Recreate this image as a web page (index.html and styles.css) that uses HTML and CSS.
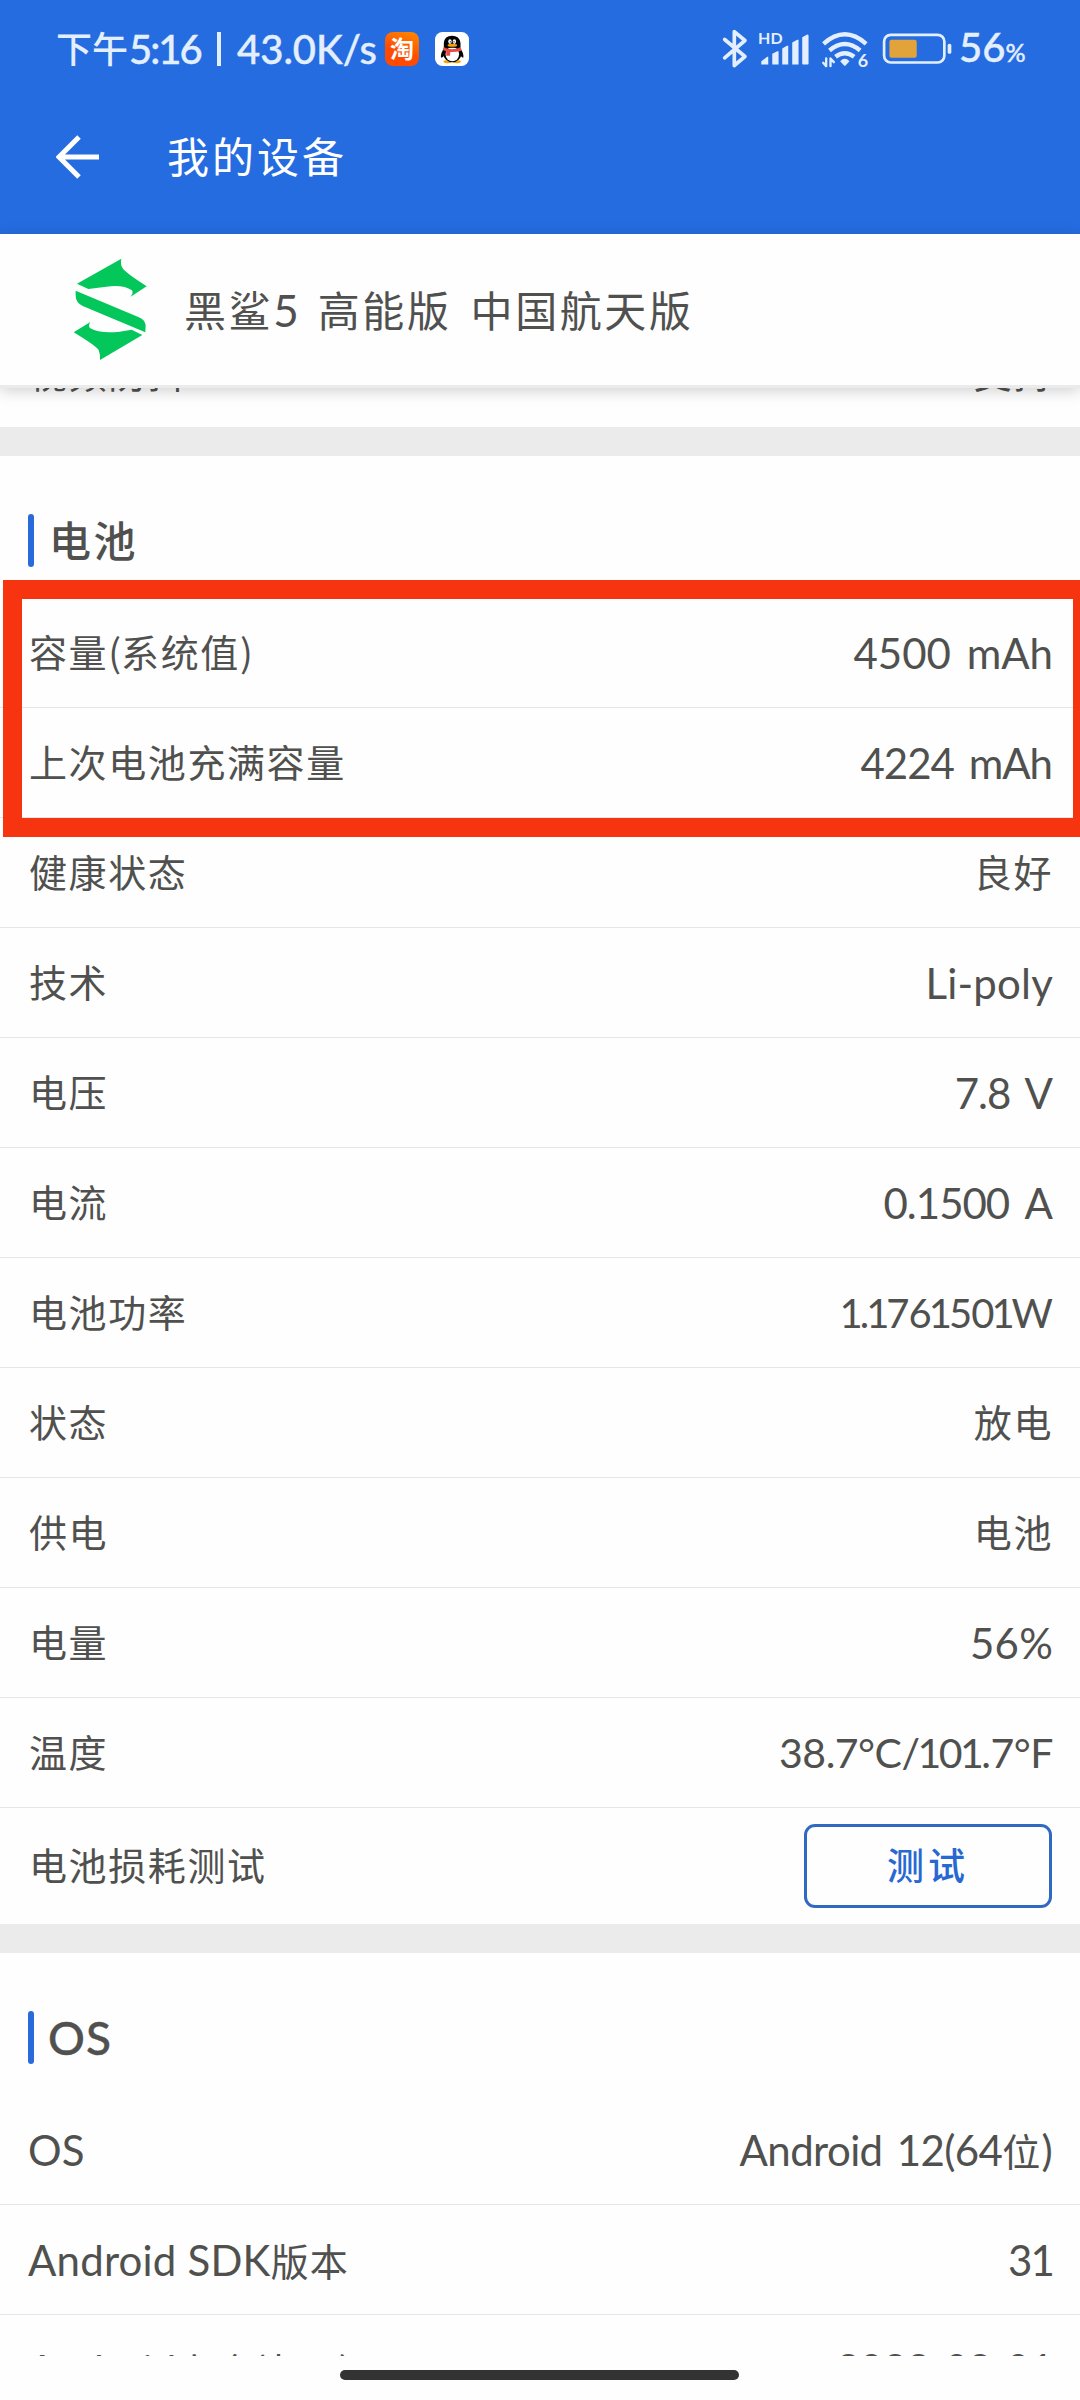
FILE: index.html
```
<!DOCTYPE html>
<html lang="zh-CN">
<head>
  <meta charset="UTF-8" />
  <meta name="viewport" content="width=device-width, initial-scale=1.0"/>
  <title>我的设备</title>
  <link rel="stylesheet" href="styles.css">
</head>
<body>

  <div class="screen">

    <div class="status-bar">
      <span class="status-cn">下午</span><span class="status-time">5:16</span>
      <span class="status-sep"></span>
      <span class="status-speed">43.0K/s</span>
      <span class="app-icon taobao">淘</span>
      <svg class="app-icon qq" viewBox="0 0 100 100">
        <rect width="100" height="100" rx="22" fill="#fff"/>
        <ellipse cx="37" cy="87" rx="12" ry="5" fill="#f5a400"/>
        <ellipse cx="64" cy="87" rx="12" ry="5" fill="#f5a400"/>
        <path d="M28 46 Q15 62 18 76 Q24 76 28 66 L74 66 Q78 76 83 76 Q86 62 73 46Z" fill="#050505"/>
        <ellipse cx="51" cy="62" rx="27" ry="27" fill="#050505"/>
        <ellipse cx="51" cy="65" rx="20" ry="21" fill="#fff"/>
        <path d="M26 46 V32 Q28 11 50 11 Q72 11 75 32 V46Z" fill="#050505"/>
        <ellipse cx="44" cy="28" rx="5" ry="7" fill="#fff"/>
        <ellipse cx="57" cy="28" rx="5" ry="7" fill="#fff"/>
        <circle cx="45" cy="29" r="2" fill="#050505"/>
        <circle cx="56" cy="29" r="2" fill="#050505"/>
        <ellipse cx="51" cy="39" rx="14" ry="4.5" fill="#f5a400"/>
        <path d="M25 45 Q50 56 76 45 L78 55 Q60 60 45 59 L44 70 H33 V57 L23 53Z" fill="#e94b45"/>
      </svg>

      <svg class="status-icons" viewBox="120 85 700 125">
        <g fill="none" stroke="#e3efff" stroke-linecap="round" stroke-linejoin="round">
          <path d="M134 119 L195 170 L163 197 V95 L195 122 L134 174" stroke-width="11"/>
          <path d="M431 132 Q495 75 559 132" stroke-width="13" stroke-linecap="butt"/>
          <path d="M449 152 Q495 113 541 152" stroke-width="13" stroke-linecap="butt"/>
          <path d="M467 171 Q495 149 523 171" stroke-width="13" stroke-linecap="butt"/>
          <rect x="613" y="105" width="181" height="83" rx="20" stroke-width="8"/>
          <path d="M439 176 V199 L430 189 M452 199 V176 L462 187" stroke-width="7"/>
        </g>
        <g fill="#e3efff">
          <path d="M244 194 V184 L262 171 H265 V194Z"/>
          <path d="M277 194 V162 L292 154 H296 V194Z"/>
          <path d="M307 194 V146 L321 138 H325 V194Z"/>
          <path d="M337 194 V128 L352 120 H356 V194Z"/>
          <path d="M367 191 V112 L382 104 Q386 104 386 108 V191 Q386 194 383 194 H370 Q367 194 367 191Z"/>
          <path d="M481 184 Q495 170 509 184 L498 196 Q495 199 492 196Z"/>
          <rect x="804" y="132" width="11" height="30" rx="5"/>
          <text class="icon-text" x="234" y="134" textLength="74">HD</text>
          <text class="icon-text wifi-six" x="534" y="201">6</text>
        </g>
        <rect x="629" y="120" width="82" height="54" rx="6" fill="#e2a33b"/>
      </svg>
      <span class="status-battery">56<small>%</small></span>
    </div>

    <div class="title-bar">
      <svg class="back" viewBox="0 0 44 44">
        <path d="M43 22 H4 M23 2 L3 22 L23 42" fill="none" stroke="#fff" stroke-width="5"/>
      </svg>
      <h1>我的设备</h1>
    </div>

    <div class="device-bar">
      <svg class="device-logo" viewBox="40 717 225 309" fill="#03c75a">
        <path d="M52 794 L185 719 Q181 735 189 748 Q197 761 261 802 L213 833 Q222 822 217 814 Q190 796 140 803 L86 810Z"/>
        <path d="M48 815 L236 894 Q256 902 258 918 L257 940 L69 861 Q48 850 48 830Z"/>
        <path d="M42 940 L92 909 Q84 922 92 928 Q120 944 180 938 L216 932 L248 948 L121 1023 Q122 1005 117 993 Q108 980 42 940Z"/>
      </svg>
      <h2><span>黑鲨<i>5</i></span><span>高能版</span><span>中国航天版</span></h2>
    </div>

    <div class="content">
      <div class="row first-row"><span>视频防抖</span><span>支持</span></div>

      <div class="section">
        <h3><span>电池</span></h3>
        <div class="row"><span>容量<i>(</i>系统值<i>)</i></span><span class="num mah">4500 mAh</span></div>
        <div class="row"><span>上次电池充满容量</span><span class="num mah2">4224 mAh</span></div>
        <div class="row"><span>健康状态</span><span>良好</span></div>
        <div class="row"><span>技术</span><span class="num">Li-poly</span></div>
        <div class="row"><span>电压</span><span class="num volt">7.8 V</span></div>
        <div class="row"><span>电流</span><span class="num amp">0.1500 A</span></div>
        <div class="row"><span>电池功率</span><span class="num watt"><em>1</em>.<em>1</em>76<em>1</em>50<em>1</em>W</span></div>
        <div class="row"><span>状态</span><span>放电</span></div>
        <div class="row"><span>供电</span><span>电池</span></div>
        <div class="row"><span>电量</span><span class="num">56%</span></div>
        <div class="row"><span>温度</span><span class="num temp">38.7°C/<em>1</em>0<em>1</em>.7°F</span></div>
        <div class="row test-row"><span>电池损耗测试</span><button>测试</button></div>
        <div class="highlight"></div>
      </div>

      <div class="section">
        <h3 class="os-title"><span>OS</span></h3>
        <div class="row"><span class="num label">OS</span><span class="num android">Android 12(64<b>位</b>)</span></div>
        <div class="row"><span class="num label">Android SDK<b>版本</b></span><span class="num">3<em>1</em></span></div>
        <div class="row"><span class="num label">Android<b>安全补丁级</b></span><span class="num date">2022-08-01</span></div>
      </div>
    </div>

    <div class="nav-bar"><div class="handle"></div></div>
  </div>

</body>
</html>
```

FILE: styles.css
```
* {
  box-sizing: border-box;
}

body {
  margin: 0;
  background: #fefefe;
  font-family: "Noto Sans CJK SC", sans-serif;
  color: #50514f;
}

h1, h2, h3 {
  margin: 0;
  font-weight: normal;
}

i, b, em {
  font-style: normal;
  font-weight: normal;
}

.screen {
  width: 1080px;
  height: 2400px;
  display: flex;
  flex-direction: column;
  overflow: hidden;
}

/* status bar */
.status-bar {
  height: 98px;
  flex: none;
  display: flex;
  align-items: center;
  padding-left: 56px;
  background: #256ce0;
  color: #e3efff;
  font-family: Lato, "Noto Sans CJK SC", sans-serif;
  font-weight: 500;
  font-size: 40px;
  line-height: 60px;
  white-space: nowrap;
}

.status-cn {
  width: 73px;
  font-size: 36px;
}

.status-time {
  width: 74px;
  letter-spacing: -2px;
}

.status-time, .status-speed, .status-battery {
  -webkit-text-stroke: 0.4px #e3efff;
}

.status-sep {
  width: 4px;
  height: 34px;
  margin: 0 15px 0 14px;
  background: #e3efff;
}

.status-speed {
  width: 149px;
  padding-left: 1px;
}

.app-icon {
  width: 34px;
  height: 34px;
  flex: none;
}

.taobao {
  border-radius: 8px;
  background: linear-gradient(200deg, #ff8a00, #ff4a00 60%);
  color: #fff;
  font-size: 24px;
  font-weight: bold;
  line-height: 33px;
  text-align: center;
}

.qq {
  margin-left: 16px;
}

.status-icons {
  width: 233px;
  height: 42px;
  margin-left: 251px;
}

.icon-text {
  font-family: Lato, sans-serif;
  font-weight: bold;
  font-size: 48px;
}

.wifi-six {
  font-size: 54px;
}

.status-battery {
  margin-left: 6px;
}

.status-battery small {
  font-size: 25px;
}

/* header */
.title-bar {
  height: 136px;
  flex: none;
  display: flex;
  align-items: center;
  padding: 0 0 18px 56px;
  background: #256ce0;
  color: #fff;
}

.back {
  width: 44px;
  height: 44px;
}

.title-bar h1 {
  margin-left: 67px;
  padding-bottom: 5px;
  font-size: 42px;
  letter-spacing: 3px;
}

.device-bar {
  position: relative;
  z-index: 1;
  height: 154px;
  flex: none;
  display: flex;
  align-items: center;
  padding-left: 73px;
  background: #fefefe;
  border-bottom: 3px solid #ebebeb;
  box-shadow: 0 3px 14px rgba(0, 0, 0, 0.18);
}

.device-logo {
  width: 75px;
  height: 103px;
}

.device-bar h2 {
  display: flex;
  gap: 19px;
  margin-left: 36px;
  padding-bottom: 3px;
  font-size: 42px;
  letter-spacing: 2.6px;
}

.device-bar i {
  font-family: Lato, sans-serif;
  font-size: 44px;
  line-height: 1;
  letter-spacing: 0;
}

/* list */
.content {
  height: 1968px;
  flex: none;
  overflow: hidden;
}

.row {
  height: 110px;
  display: flex;
  align-items: center;
  justify-content: space-between;
  padding: 0 27px 4px 29px;
  border-bottom: 1px solid #e6e6e6;
  font-size: 38px;
  line-height: 60px;
  letter-spacing: 1.6px;
  white-space: nowrap;
}

.row i {
  letter-spacing: 0;
}

.first-row {
  margin-top: -71px;
  padding-bottom: 1px;
  border-bottom: none;
}

.row .num {
  padding-top: 5px;
  font-family: Lato, "Noto Sans CJK SC", sans-serif;
  font-size: 42px;
  letter-spacing: 0.2px;
}

.num b {
  font-size: 38px;
  letter-spacing: 1px;
}

/* narrow figure one */
.num em {
  margin: 0 -2px;
}

.row .label {
  margin-left: -1px;
}

.row .mah {
  letter-spacing: 0;
  word-spacing: 5px;
}

.row .mah2 {
  margin-right: 1px;
  letter-spacing: -1px;
  word-spacing: 5px;
}

.row .volt {
  margin-right: 1px;
  letter-spacing: -1px;
  word-spacing: 6px;
}

.row .amp {
  margin-right: 1px;
  letter-spacing: -1px;
  word-spacing: 7px;
}

.row .watt {
  margin-right: 1px;
  font-size: 40px;
  letter-spacing: -1px;
}

.row .temp {
  font-size: 41px;
  letter-spacing: -0.5px;
}

.row .android {
  margin-right: 1px;
  letter-spacing: -0.6px;
  word-spacing: 4px;
}

.row .date {
  padding-top: 3px;
  letter-spacing: -0.9px;
}

.section {
  position: relative;
  border-top: 29px solid #ebebeb;
}

.section h3 {
  height: 142px;
  display: flex;
  align-items: center;
  padding: 27px 0 0 28px;
  font-size: 42px;
  font-weight: 500;
  letter-spacing: 2.5px;
}

.section h3 span {
  padding-bottom: 4px;
}

.section h3::before {
  content: "";
  width: 6px;
  height: 53px;
  margin-right: 15px;
  border-radius: 3px;
  background: #2a6bdc;
}

.section .os-title {
  font-family: Lato, sans-serif;
  font-size: 46px;
  letter-spacing: 1px;
  -webkit-text-stroke: 0.4px #50514f;
}

.section .os-title span {
  margin-left: -1px;
  padding-bottom: 1px;
}

.test-row {
  height: 116px;
  border-bottom: none;
}

.test-row button {
  width: 248px;
  height: 84px;
  margin: 4px 1px 0 0;
  padding: 0 0 4px;
  border: 3px solid #3069c2;
  border-radius: 11px;
  background: #fefefe;
  color: #2768d2;
  font: 500 37px/60px "Noto Sans CJK SC", sans-serif;
  letter-spacing: 4px;
}

/* frame drawn over the capacity rows */
.highlight {
  position: absolute;
  left: 3px;
  right: -12px;
  top: 124px;
  height: 257px;
  border: 19px solid #f73410;
}

.nav-bar {
  flex: 1;
  display: flex;
  justify-content: center;
  padding: 14px 2px 0 0;
  background: #fefefe;
}

.handle {
  width: 399px;
  height: 10px;
  border-radius: 5px;
  background: #333;
}
```
